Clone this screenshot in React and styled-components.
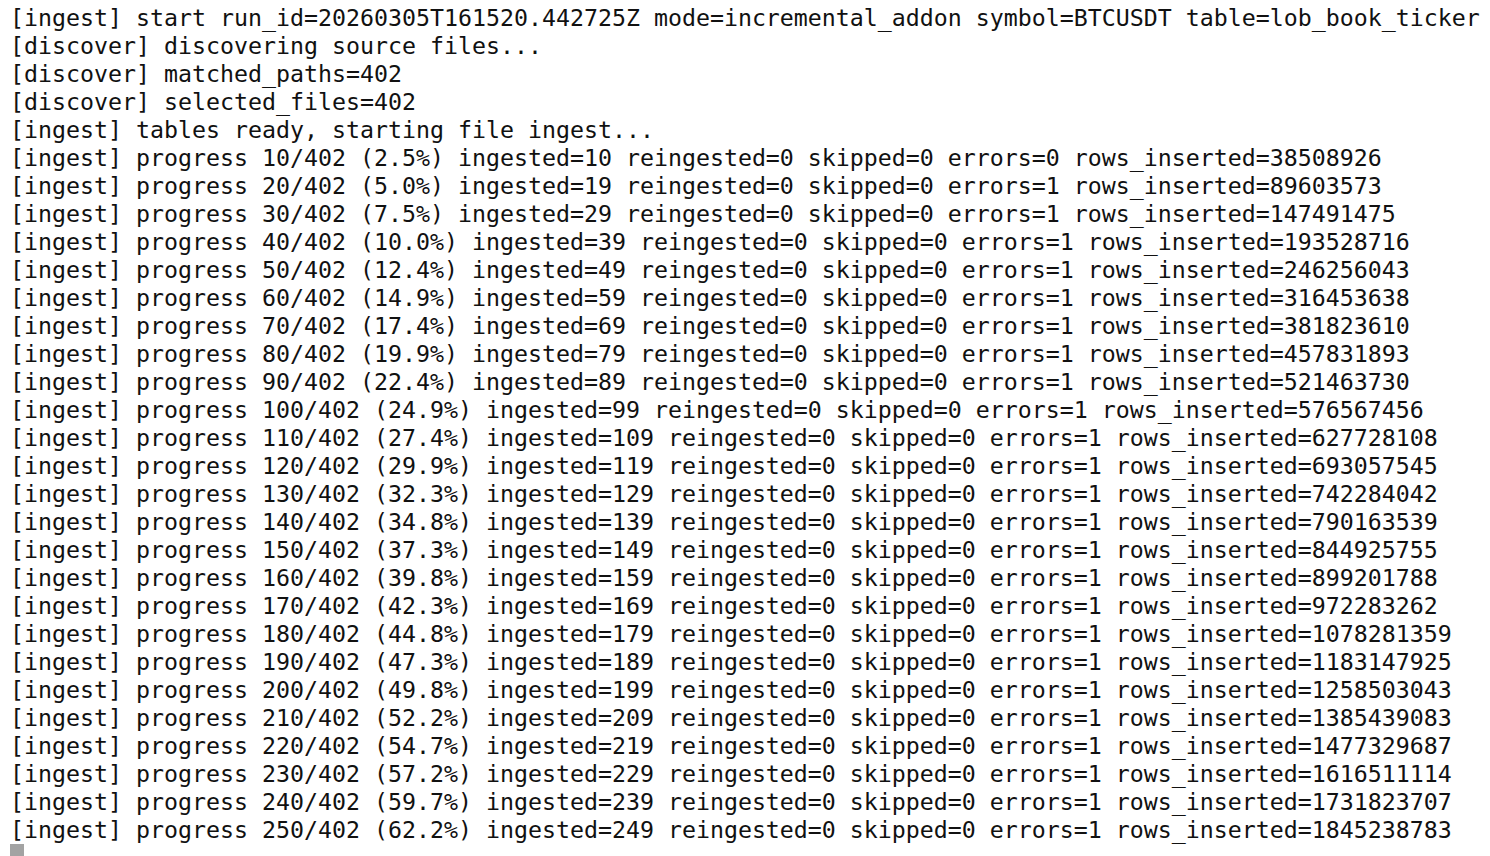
import React from 'react';
import styled, { createGlobalStyle } from 'styled-components';

const GlobalStyle = createGlobalStyle`
    html, body {
        margin: 0;
        padding: 0;
        background: #ffffff;
        overflow: hidden;
    }
`;

const Terminal = styled.div`
    height: 856px;
    box-sizing: border-box;
    padding: 4px 0 0 10px;
    background: #ffffff;
    color: #111111;
    font-family: 'DejaVu Sans Mono', 'Liberation Mono', monospace;
    font-size: 23.25px;
    line-height: 28px;
    overflow: hidden;
`;

const Line = styled.div`
    position: relative;
    white-space: pre;
    height: 28px;
`;

const Cursor = styled.span`
    display: inline-block;
    width: 14px;
    height: 28px;
    vertical-align: top;
    background: #a3a3a3;
`;

const progress = [
    [10, '2.5%', 10, 0, 38508926],
    [20, '5.0%', 19, 1, 89603573],
    [30, '7.5%', 29, 1, 147491475],
    [40, '10.0%', 39, 1, 193528716],
    [50, '12.4%', 49, 1, 246256043],
    [60, '14.9%', 59, 1, 316453638],
    [70, '17.4%', 69, 1, 381823610],
    [80, '19.9%', 79, 1, 457831893],
    [90, '22.4%', 89, 1, 521463730],
    [100, '24.9%', 99, 1, 576567456],
    [110, '27.4%', 109, 1, 627728108],
    [120, '29.9%', 119, 1, 693057545],
    [130, '32.3%', 129, 1, 742284042],
    [140, '34.8%', 139, 1, 790163539],
    [150, '37.3%', 149, 1, 844925755],
    [160, '39.8%', 159, 1, 899201788],
    [170, '42.3%', 169, 1, 972283262],
    [180, '44.8%', 179, 1, 1078281359],
    [190, '47.3%', 189, 1, 1183147925],
    [200, '49.8%', 199, 1, 1258503043],
    [210, '52.2%', 209, 1, 1385439083],
    [220, '54.7%', 219, 1, 1477329687],
    [230, '57.2%', 229, 1, 1616511114],
    [240, '59.7%', 239, 1, 1731823707],
    [250, '62.2%', 249, 1, 1845238783],
];

const lines = [
    '[ingest] start run_id=20260305T161520.442725Z mode=incremental_addon symbol=BTCUSDT table=lob_book_ticker',
    '[discover] discovering source files...',
    '[discover] matched_paths=402',
    '[discover] selected_files=402',
    '[ingest] tables ready, starting file ingest...',
    ...progress.map(
        ([n, pct, ing, err, rows]) =>
            `[ingest] progress ${n}/402 (${pct}) ingested=${ing} reingested=0 skipped=0 errors=${err} rows_inserted=${rows}`
    ),
];

const App = () => {
    return (
        <>
            <GlobalStyle />
            <Terminal>
                {lines.map((text, i) => (
                    <Line key={i}>{text}</Line>
                ))}
                <Line>
                    <Cursor />
                </Line>
            </Terminal>
        </>
    );
};

export default App;
